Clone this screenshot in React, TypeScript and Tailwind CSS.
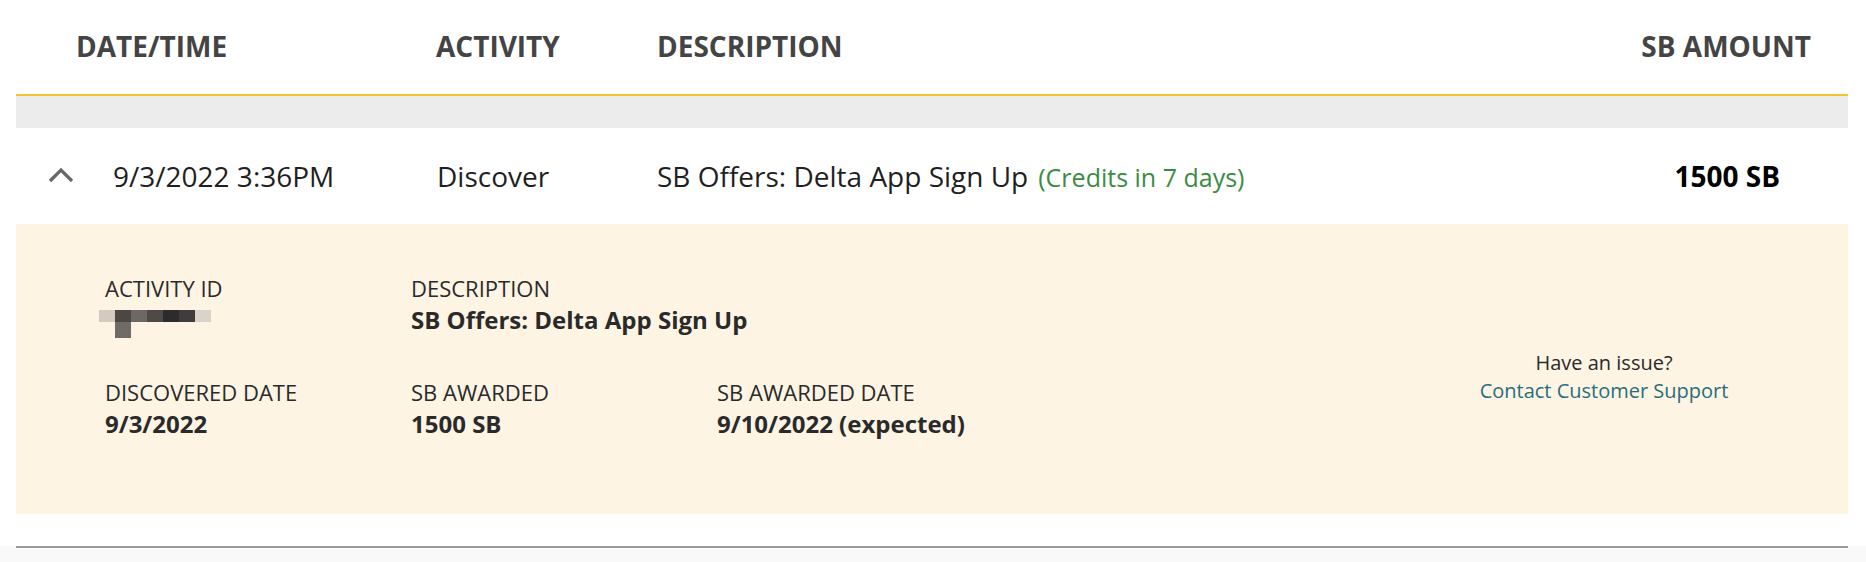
import { Fragment } from 'react'

const redacted = ['#d3cbc0', '#4a4744', '#6c6864', '#4d4a48', '#2e2c2b', '#3f3d3c', '#d9d3ca']

function RedactedId() {
  return (
    <div className="mt-[6px] ml-[-6px] flex flex-col">
      <div className="flex h-[12px]">
        {redacted.map((c, i) => (
          <div key={i} className="w-[16px] h-full" style={{ backgroundColor: c }} />
        ))}
      </div>
      <div className="ml-[16px] w-[16px] h-[16px] bg-[#6f6b67]" />
    </div>
  )
}

function Field({ label, children }: { label: string; children: React.ReactNode }) {
  return (
    <div className="flex flex-col">
      <span className="text-[22px] leading-[32px] text-[#2a2a2a] uppercase">{label}</span>
      {children}
    </div>
  )
}

function Value({ children }: { children: React.ReactNode }) {
  return <span className="text-[24px] leading-[32px] font-bold text-[#2a2a2a]">{children}</span>
}

export default function App() {
  return (
    <div className="min-h-[562px] bg-[#f9f9f9]" style={{ fontFamily: '"Open Sans", "Liberation Sans", sans-serif' }}>
      <div className="bg-white px-[16px] pr-[18px]">
        <div className="flex items-center h-[96px] pb-[2px] border-b-2 border-[#f2c232] text-[28px] font-bold text-[#444] pl-[60px] pr-[37px]">
          <div className="w-[360px]">DATE/TIME</div>
          <div className="w-[221px]">ACTIVITY</div>
          <div className="flex-1">DESCRIPTION</div>
          <div>SB AMOUNT</div>
        </div>
        <div className="h-[32px] bg-[#ececec]" />

        <div className="flex items-center h-[96px] text-[28px] text-[#1f1f1f] pl-[32px] pr-[68px]">
          <svg width="26" height="16" viewBox="0 0 26 16" className="mr-[39px] mt-[-2px]">
            <polyline points="2,14 13,3 24,14" fill="none" stroke="#666" strokeWidth="3.2" />
          </svg>
          <div className="w-[324px]">9/3/2022 3:36PM</div>
          <div className="w-[220px]">Discover</div>
          <div className="flex-1 flex items-baseline">
            <span>SB Offers: Delta App Sign Up</span>
            <span className="ml-[10px] text-[25px] text-[#3b8c42]">(Credits in 7 days)</span>
          </div>
          <div className="font-bold text-black">1500 SB</div>
        </div>

        <div className="flex bg-[#fdf4e4] h-[290px] pl-[89px] pt-[48px]">
          <div className="grid grid-cols-[306px_306px_306px] gap-y-[38px] content-start">
            <Field label="Activity ID">
              <RedactedId />
            </Field>
            <div className="col-span-2">
              <Field label="Description">
                <Value>SB Offers: Delta App Sign Up</Value>
              </Field>
            </div>
            {[
              ['Discovered Date', '9/3/2022'],
              ['SB Awarded', '1500 SB'],
              ['SB Awarded Date', '9/10/2022 (expected)'],
            ].map(([l, v]) => (
              <Fragment key={l}>
                <Field label={l}>
                  <Value>{v}</Value>
                </Field>
              </Fragment>
            ))}
          </div>
          <div className="flex-1 flex justify-end pr-[100px]">
            <div className="w-[288px] flex flex-col items-center mt-[77px] text-[20px] leading-[28px]">
              <span className="text-[#2a2a2a]">Have an issue?</span>
              <a className="text-[#2a6d7b]">Contact Customer Support</a>
            </div>
          </div>
        </div>

        <div className="h-[32px]" />
      </div>
      <div className="mx-[16px] mr-[18px] h-[2px] bg-[#999]" />
    </div>
  )
}
